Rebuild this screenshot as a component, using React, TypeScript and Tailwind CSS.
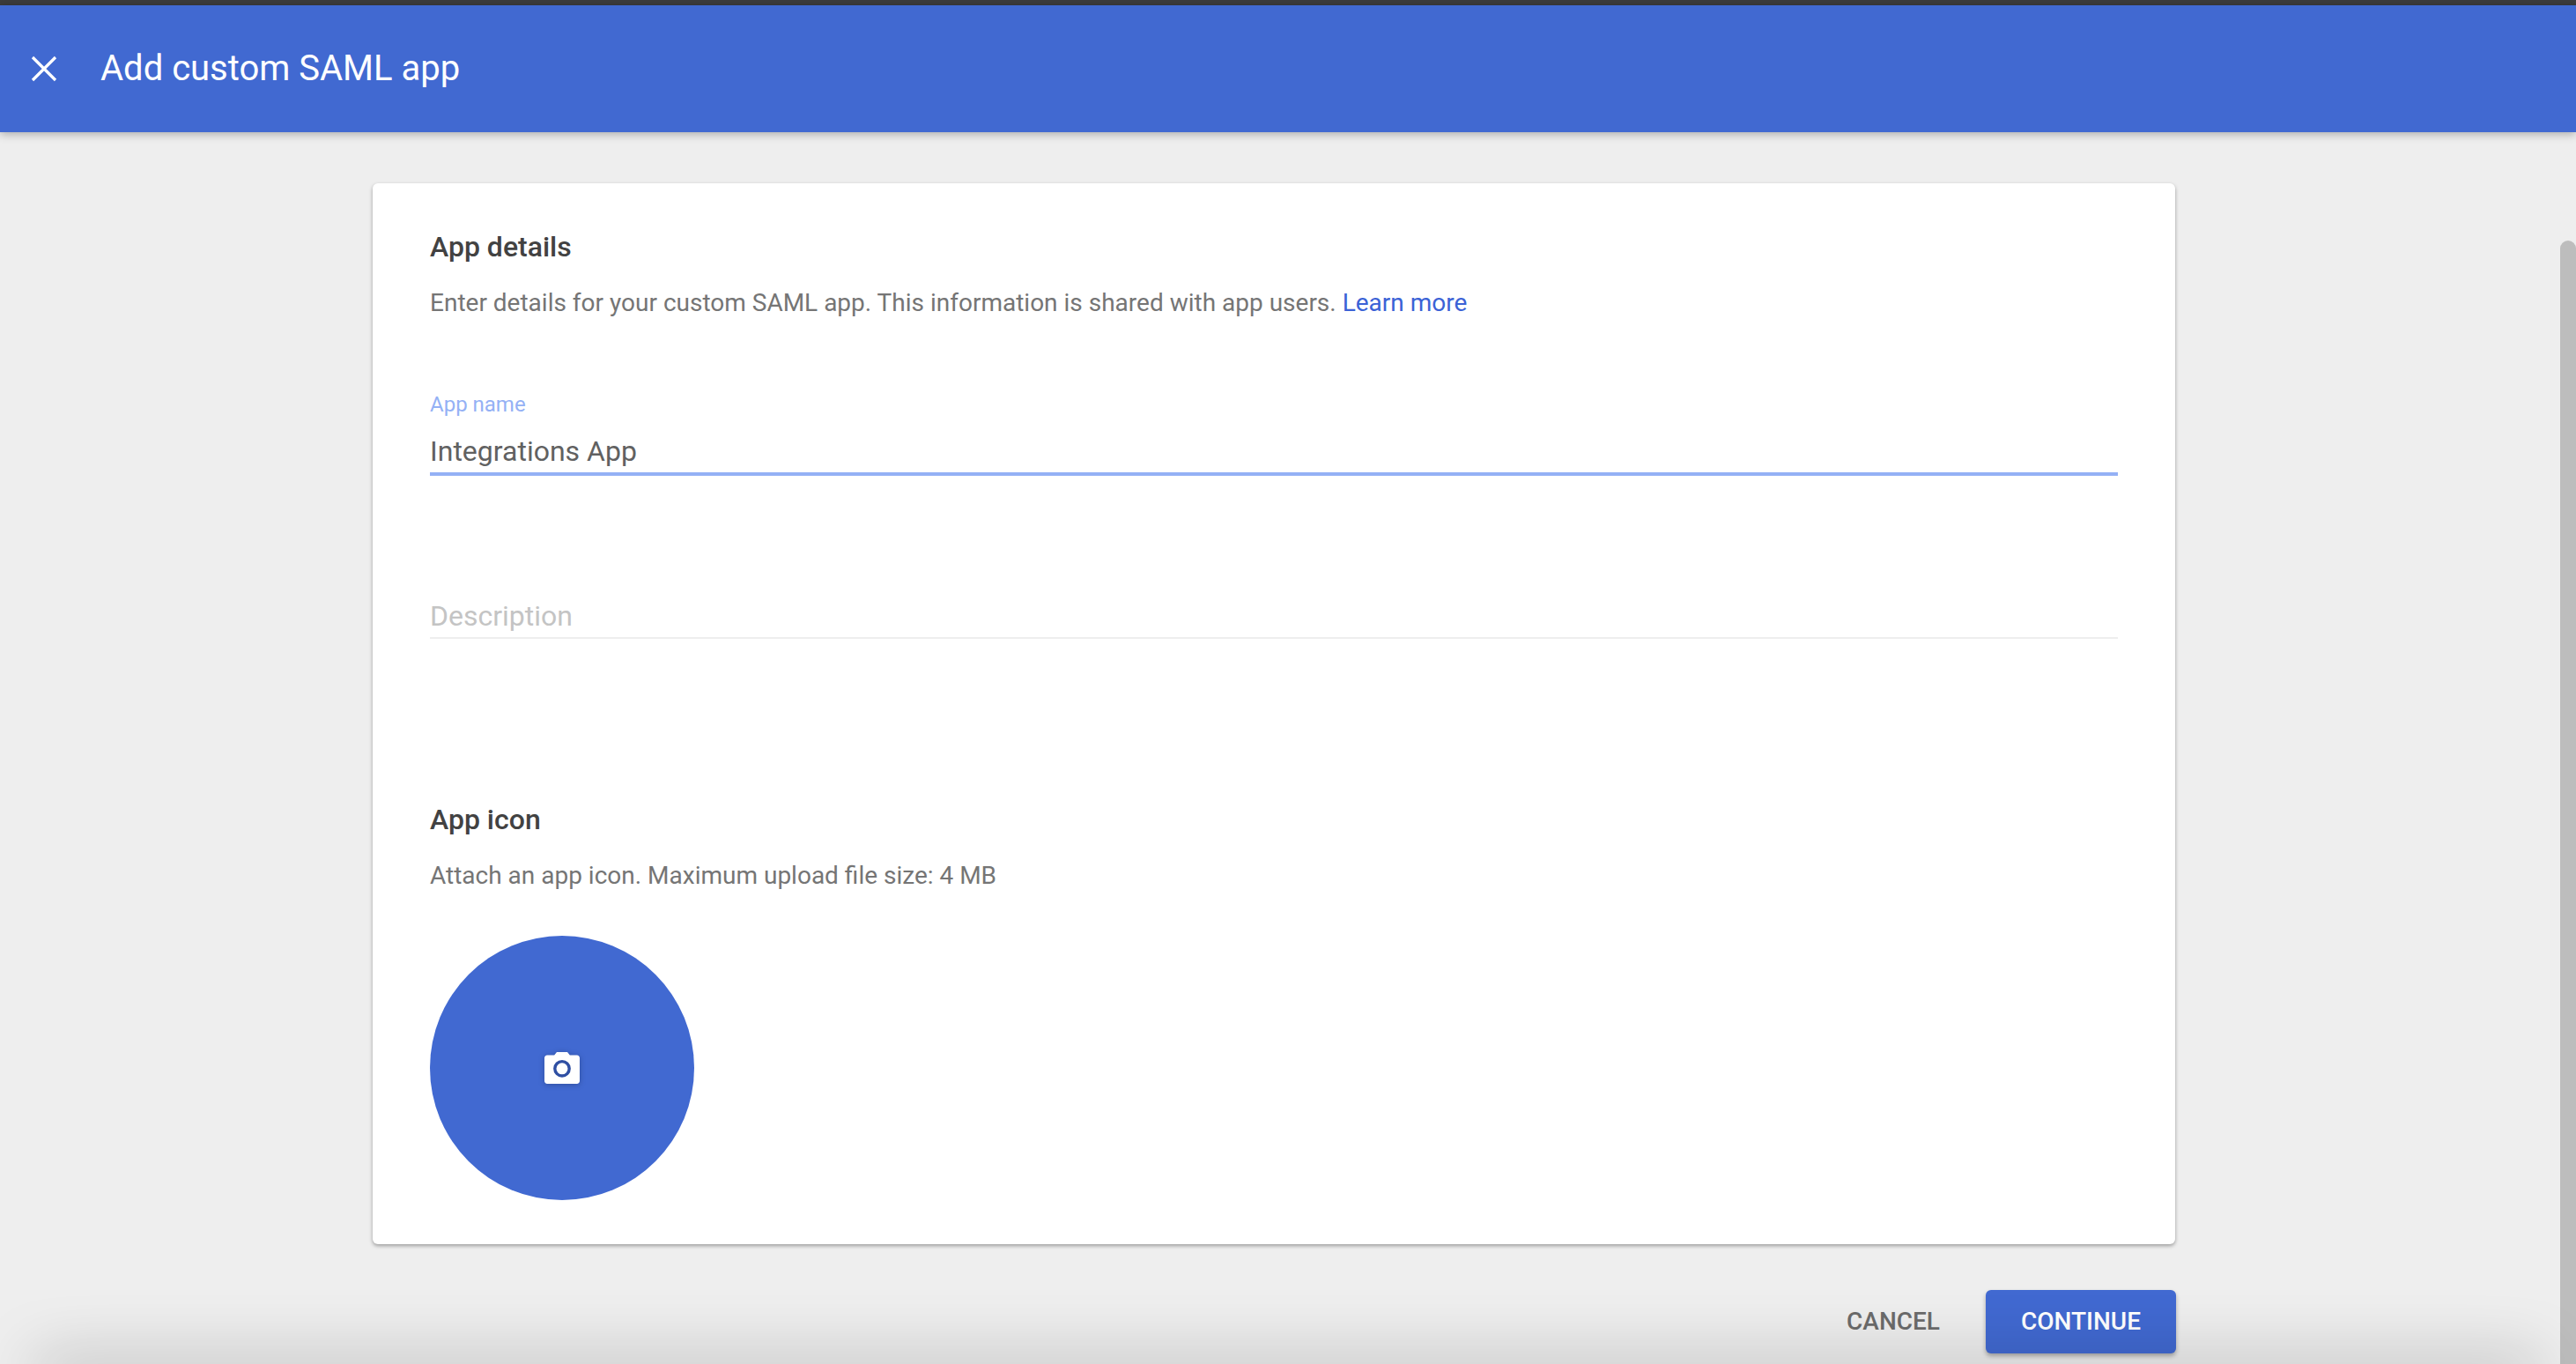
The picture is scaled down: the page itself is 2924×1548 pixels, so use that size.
export default function App() {
  return (
    <div className="relative flex h-screen w-full flex-col overflow-hidden bg-[#eeeeee] font-['Roboto',sans-serif]">
      <div className="h-[6px] shrink-0 bg-[#3c3c3c]" />
      <header className="relative z-10 flex h-[144px] shrink-0 items-center bg-[#4169d1] pl-[35px] shadow-[0_2px_10px_rgba(0,0,0,0.3)]">
        <svg className="h-[30px] w-[30px] shrink-0" viewBox="0 0 30 30" fill="none" stroke="#fff" strokeWidth="3.2">
          <path d="M2 2 L28 28 M28 2 L2 28" />
        </svg>
        <h1 className="ml-[49px] text-[40px] font-normal text-white">Add custom SAML app</h1>
      </header>
      <main className="flex flex-1 flex-col pl-[423px] pr-[454px] pt-[58px]">
        <section className="mr-[1px] flex h-[1204px] shrink-0 flex-col rounded-[6px] bg-white pl-[65px] pr-[65px] pt-[52px] shadow-[0_2px_4px_rgba(0,0,0,0.35)]">
          <h2 className="text-[32px] font-medium leading-[40px] text-[#424242]">App details</h2>
          <p className="mt-[26px] text-[28px] leading-[36px] text-[#757575]">
            Enter details for your custom SAML app. This information is shared with app users.{" "}
            <span className="text-[#3b62d6]">Learn more</span>
          </p>
          <label className="mt-[81px] text-[24px] leading-[32px] text-[#94b1f5]">App name</label>
          <div className="mt-[14px] h-[51px] border-b-4 border-[#94b1f5] text-[32px] leading-[46px] text-[#616161]">Integrations App</div>
          <div className="mt-[138px] h-[47px] border-b-2 border-[#eeeeee] text-[32px] leading-[42px] text-[#c4c4c4]">Description</div>
          <h2 className="mt-[185px] text-[32px] font-medium leading-[40px] text-[#424242]">App icon</h2>
          <p className="mt-[26px] text-[28px] leading-[36px] text-[#757575]">Attach an app icon. Maximum upload file size: 4 MB</p>
          <div className="mt-[50px] flex h-[300px] w-[300px] items-center justify-center rounded-full bg-[#4169d1]">
            <svg className="h-[48px] w-[48px] drop-shadow-[0_1px_3px_rgba(0,0,0,0.25)]" viewBox="0 0 24 24">
              <path fill="#fff" d="M9 3L7.6 4.8H3.6c-.9 0-1.6.7-1.6 1.6v13c0 .9.7 1.6 1.6 1.6h16.8c.9 0 1.6-.7 1.6-1.6v-13c0-.9-.7-1.6-1.6-1.6h-4L15 3H9z" />
              <circle cx="12" cy="12.4" r="4.1" fill="none" stroke="#2f4fa3" strokeWidth="1.7" />
            </svg>
          </div>
        </section>
        <div className="mt-[52px] flex items-center justify-end">
          <button className="mr-[52px] text-[28px] font-medium text-[#6b6b6b]">CANCEL</button>
          <button className="h-[72px] w-[216px] rounded-[6px] bg-[#4169d1] text-[28px] font-medium text-white shadow-[0_3px_5px_rgba(0,0,0,0.3)]">CONTINUE</button>
        </div>
      </main>
      <div className="absolute right-0 top-[273px] bottom-0 w-[18px] rounded-t-[9px] bg-[#bdbdbd]" />
      <div className="absolute left-[40px] right-[40px] top-full h-[20px] shadow-[0_0_70px_rgba(0,0,0,0.4)]" />
    </div>
  );
}
